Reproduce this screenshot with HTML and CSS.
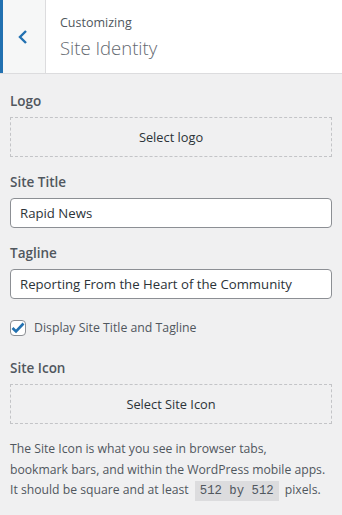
FILE: index.html
```html
<!DOCTYPE html>
<html lang="en">
<head>
    <meta charset="UTF-8">
    <meta name="viewport" content="width=device-width, initial-scale=1.0">
    <title>Site Identity</title>
    <link rel="stylesheet" href="styles.css">
</head>
<body>

    <div class="panel-head">
        <button class="back-btn" aria-label="Back">
            <svg width="12" height="16" viewBox="0 0 12 16"><path d="M9 2 L3 8 L9 14" fill="none" stroke="#2271b1" stroke-width="2.4"/></svg>
        </button>
        <div class="head-title">
            <span class="crumb">Customizing</span>
            <h3>Site Identity</h3>
        </div>
    </div>

    <div class="controls">
        <div class="control">
            <label class="control-label">Logo</label>
            <button class="upload-btn">Select logo</button>
        </div>

        <div class="control">
            <label class="control-label" for="blogname">Site Title</label>
            <input type="text" id="blogname" value="Rapid News">
        </div>

        <div class="control">
            <label class="control-label" for="tagline">Tagline</label>
            <input type="text" id="tagline" value="Reporting From the Heart of the Community">
        </div>

        <div class="control check-row">
            <span class="checkbox">
                <svg width="14" height="12" viewBox="0 0 14 12"><path d="M1.5 6 L5 9.5 L12.5 1.5" fill="none" stroke="#2271b1" stroke-width="2.6"/></svg>
            </span>
            <span>Display Site Title and Tagline</span>
        </div>

        <div class="control">
            <label class="control-label">Site Icon</label>
            <button class="upload-btn">Select Site Icon</button>
            <p class="description">The Site Icon is what you see in browser tabs,<br>bookmark bars, and within the WordPress mobile apps.<br>It should be square and at least <code>512 by 512</code> pixels.</p>
        </div>
    </div>

</body>
</html>
```

FILE: styles.css
```css
* {
    margin: 0;
    padding: 0;
    box-sizing: border-box;
}
body {
    background-color: #f0f0f1;
    font-family: "Open Sans", "Noto Sans", sans-serif;
    font-size: 13px;
    color: #3c434a;
}
.panel-head {
    display: flex;
    height: 74px;
    background: white;
    border-bottom: 1px solid #dcdcde;
}
.back-btn {
    width: 46px;
    background: #f6f7f7;
    border: none;
    border-left: 3px solid #2271b1;
    border-right: 1px solid #dcdcde;
    display: flex;
    align-items: center;
    justify-content: center;
    padding-right: 3px;
}
.head-title {
    padding: 14px 0 0 14px;
    color: #50575e;
}
.crumb {
    display: block;
    font-size: 12.5px;
    line-height: 18px;
}
.head-title h3 {
    font-size: 18.5px;
    font-weight: 300;
    line-height: 30px;
    margin-top: 1px;
    color: #646970;
}
.controls {
    padding: 17px 10px;
}
.control {
    margin-bottom: 15px;
}
.control-label {
    display: block;
    font-size: 13.5px;
    font-weight: 600;
    line-height: 20px;
    margin-bottom: 6px;
    color: #50575e;
}
.upload-btn {
    width: 100%;
    height: 40px;
    border: 1px dashed #c3c4c7;
    background: transparent;
    font-family: inherit;
    font-size: 12.8px;
    color: #2c3338;
}
input[type="text"] {
    width: 100%;
    height: 30px;
    padding: 0 9px;
    border: 1px solid #8c8f94;
    border-radius: 4px;
    background: white;
    font-family: inherit;
    font-size: 13.2px;
    color: #2c3338;
}
.check-row {
    display: flex;
    align-items: center;
    gap: 8px;
    margin-top: 20px;
    margin-bottom: 22px;
    color: #50575e;
    font-size: 12.3px;
}
.checkbox {
    width: 16px;
    height: 16px;
    border: 1px solid #8c8f94;
    border-radius: 4px;
    background: white;
    display: flex;
    align-items: center;
    justify-content: center;
}
.description {
    margin-top: 15px;
    line-height: 20.5px;
    color: #50575e;
    font-size: 12.2px;
    white-space: nowrap;
}
code {
    font-family: "Liberation Mono", monospace;
    font-size: 12.3px;
    background: #dcdcde;
    padding: 3px 5px;
    margin: 0 3px;
}
```
